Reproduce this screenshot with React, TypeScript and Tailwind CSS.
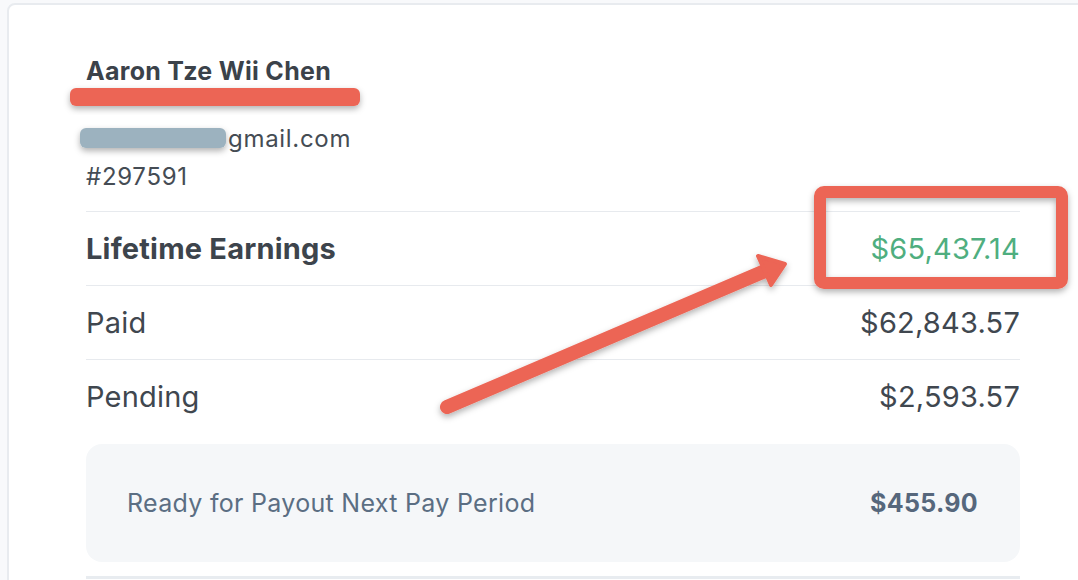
import React from "react";

const font = { fontFamily: "Inter, 'Open Sans', sans-serif" };

function Row({ label, value, bold, green }: { label: string; value: string; bold?: boolean; green?: boolean }) {
  return (
    <div className="flex h-[74px] items-center justify-between border-t border-[#e7eaee]">
      <span className={`text-[29px] leading-none tracking-[0.2px] ${bold ? "font-bold text-[#3d444c]" : "text-[#40474f]"}`}>{label}</span>
      <span className={`text-[29px] leading-none tracking-[0.2px] ${green ? "text-[#4fae7f]" : "text-[#40474f]"}`}>{value}</span>
    </div>
  );
}

export default function App() {
  return (
    <div className="relative h-[580px] w-[1078px] overflow-hidden bg-[#f8f9fb] pl-[7px] pt-[3px]" style={font}>
      <div className="h-[620px] w-[1120px] rounded-lg border-2 border-[#e8ebef] bg-white pl-[77px] pt-[50px]">
        <div className="w-[934px]">
          <div className="text-[25px] font-bold leading-[32px] tracking-[0.3px] text-[#3b424a]">Aaron Tze Wii Chen</div>
          <div className="mt-[34px] flex text-[24px] leading-[36px] tracking-[0.7px] text-[#454c54]">
            <span className="w-[142px]"></span>
            <span>gmail.com</span>
          </div>
          <div className="text-[24px] leading-[40px] tracking-[0.7px] text-[#454c54]">#297591</div>
          <div className="mt-[14px]">
            <Row label="Lifetime Earnings" value="$65,437.14" bold green />
            <Row label="Paid" value="$62,843.57" />
            <Row label="Pending" value="$2,593.57" />
          </div>
          <div className="mt-[11px] flex h-[118px] items-center justify-between rounded-2xl bg-[#f5f7f9] pl-[41px] pr-[42px]">
            <span className="text-[25px] leading-none tracking-[0.3px] text-[#5b6e83]">Ready for Payout Next Pay Period</span>
            <span className="text-[25px] font-bold leading-none tracking-[0.3px] text-[#56677c]">$455.90</span>
          </div>
          <div className="mt-[14px] h-[3px] bg-[#e8ecf0]"></div>
        </div>
      </div>

      <svg className="pointer-events-none absolute left-0 top-0" width="1078" height="580" viewBox="0 0 1078 580">
        <defs>
          <filter id="sh" x="-20%" y="-50%" width="140%" height="200%">
            <feDropShadow dx="0" dy="3" stdDeviation="3" floodColor="#000" floodOpacity="0.3" />
          </filter>
        </defs>
        <rect x="70" y="88" width="290" height="18" rx="6" fill="#ec6555" filter="url(#sh)" />
        <rect x="80" y="128" width="146" height="20" rx="6" fill="#9cb2bf" filter="url(#sh)" />
        <rect x="820" y="192" width="242" height="91" rx="4" fill="none" stroke="#ec6555" strokeWidth="12" filter="url(#sh)" />
        <g filter="url(#sh)">
          <line x1="447" y1="407" x2="772" y2="268" stroke="#ec6555" strokeWidth="14" strokeLinecap="round" />
          <polygon points="758,256 785,264 771,285" fill="#ec6555" stroke="#ec6555" strokeWidth="4" strokeLinejoin="round" />
        </g>
      </svg>
    </div>
  );
}
